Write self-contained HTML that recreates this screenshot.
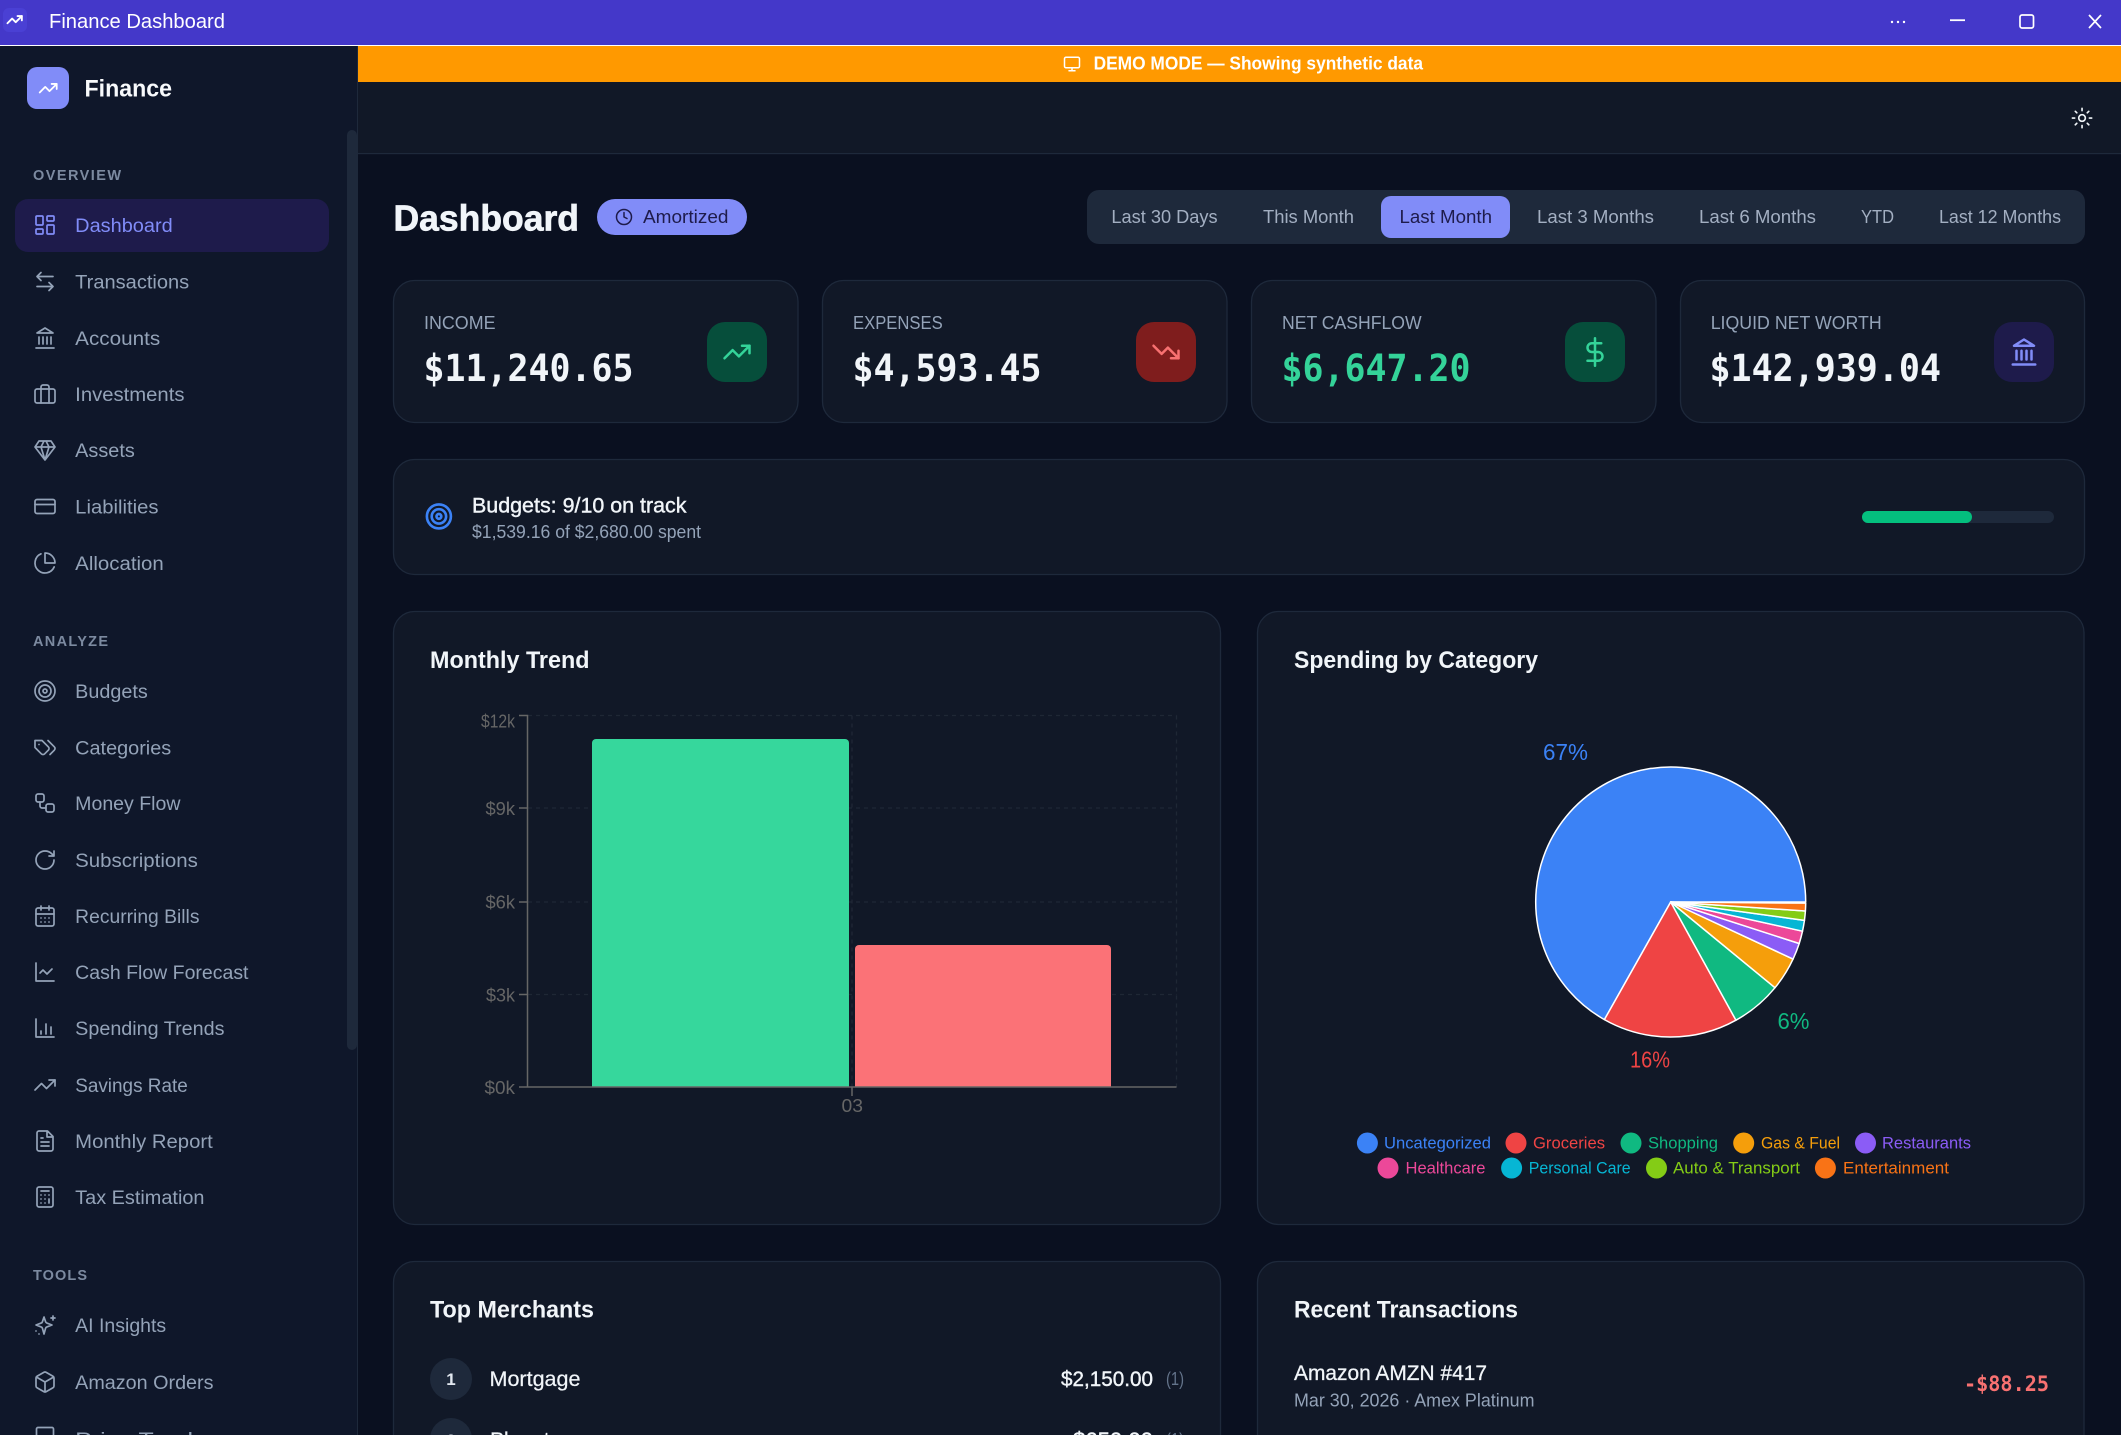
<!DOCTYPE html>
<html lang="en">
<head>
<meta charset="utf-8">
<title>Finance Dashboard</title>
<style>
html,body{margin:0;padding:0;width:2121px;height:1435px;overflow:hidden;background:#0a1020}
svg{display:block}
text{font-family:"Liberation Sans",sans-serif;white-space:pre}
.nav{font-size:19px;fill:#94a3b8}
.sec{font-size:14.5px;fill:#7c8aa0;font-weight:bold}
.ic{fill:none;stroke:#94a3b8;stroke-width:1.7;stroke-linecap:round;stroke-linejoin:round}
.lab{font-size:18px;fill:#94a3b8}
.val{font-family:"DejaVu Sans Mono","Liberation Mono",monospace;font-size:37px;font-weight:bold;fill:#f1f5f9}
.per{font-size:18px;fill:#a3afc2}
.card{fill:#111827;stroke:#1e293b;stroke-width:1.3}
.h{font-size:24px;font-weight:bold;fill:#f1f5f9}
.axis{font-size:18px;fill:#666}
.grid{stroke:#1f2735;stroke-width:1.3;stroke-dasharray:4 4;fill:none}
.leg{font-size:17px}
.pct{font-size:23px}
.slice{stroke:#fff;stroke-width:1.5;stroke-linejoin:round}
</style>
</head>
<body>
<svg xmlns="http://www.w3.org/2000/svg" width="2121" height="1435" viewBox="0 0 2121 1435">
  <defs>
    <g id="i-trend"><polyline points="22 7 13.5 15.5 8.5 10.5 2 17"/><polyline points="16 7 22 7 22 13"/></g>
    <g id="i-land"><path d="M3 22h18M6 18v-7M10 18v-7M14 18v-7M18 18v-7"/><path d="M12 2 20 7H4Z"/></g>
    <g id="i-target"><circle cx="12" cy="12" r="10"/><circle cx="12" cy="12" r="6"/><circle cx="12" cy="12" r="2"/></g>
  </defs>

  <!-- window chrome -->
  <rect width="2121" height="45" fill="#4438c9"/>
  <rect y="45" width="2121" height="1.2" fill="#fff"/>
  <rect x="3" y="8" width="24" height="24" rx="6" fill="#4a40d4"/>
  <use href="#i-trend" transform="translate(6,11) scale(.72)" fill="none" stroke="#fff" stroke-width="2.6" stroke-linecap="round" stroke-linejoin="round"/>
  <text x="49" y="28" font-size="20" fill="#fff" textLength="176" lengthAdjust="spacingAndGlyphs">Finance Dashboard</text>
  <g fill="#fff"><circle cx="1892" cy="22" r="1.2"/><circle cx="1898" cy="22" r="1.2"/><circle cx="1904" cy="22" r="1.2"/><rect x="1950" y="19.3" width="15" height="1.8"/></g>
  <rect x="2020" y="15" width="13.5" height="13" rx="2" fill="none" stroke="#fff" stroke-width="1.7"/>
  <path d="M2089 15l12 13M2101 15l-12 13" stroke="#fff" stroke-width="1.7" fill="none"/>

  <!-- sidebar -->
  <g>
    <rect y="46" width="357" height="1389" fill="#0f172a"/>
    <rect x="357" y="46" width="1" height="1389" fill="#1e293b"/>
    <rect x="347" y="130" width="10" height="920" rx="5" fill="#1e293b"/>
    <rect x="27" y="67" width="42" height="42" rx="10" fill="#818cf8"/>
    <use href="#i-trend" transform="translate(38,78) scale(.85)" fill="none" stroke="#fff" stroke-width="2.1" stroke-linecap="round" stroke-linejoin="round"/>
    <text x="84.5" y="96.500" font-size="24" font-weight="bold" fill="#f8fafc" textLength="87.500" lengthAdjust="spacingAndGlyphs">Finance</text>

    <text class="sec" x="33" y="180" textLength="88" lengthAdjust="spacing">OVERVIEW</text>
    <rect x="15" y="199" width="314" height="53" rx="13" fill="#1e1b4b"/>
    <g class="ic" style="stroke:#818cf8" transform="translate(33,213)"><rect x="3" y="3" width="7" height="9" rx="1"/><rect x="14" y="3" width="7" height="5" rx="1"/><rect x="14" y="12" width="7" height="9" rx="1"/><rect x="3" y="16" width="7" height="5" rx="1"/></g>
    <text class="nav" style="fill:#818cf8" x="75.2" y="232" textLength="97.5" lengthAdjust="spacingAndGlyphs">Dashboard</text>

    <g class="ic" transform="translate(33,269.5)"><path d="M8 3 4 7l4 4M4 7h16M16 21l4-4-4-4M20 17H4"/></g>
    <text class="nav" x="75.2" y="288.5" textLength="114" lengthAdjust="spacingAndGlyphs">Transactions</text>
    <g class="ic" transform="translate(33,326)"><use href="#i-land"/></g>
    <text class="nav" x="75.2" y="345" textLength="85" lengthAdjust="spacingAndGlyphs">Accounts</text>
    <g class="ic" transform="translate(33,382)"><rect x="2" y="7" width="20" height="14" rx="2"/><path d="M16 21V5a2 2 0 0 0-2-2h-4a2 2 0 0 0-2 2v16"/></g>
    <text class="nav" x="75.2" y="401" textLength="109.3" lengthAdjust="spacingAndGlyphs">Investments</text>
    <g class="ic" transform="translate(33,438)"><path d="M6 3h12l4 6-10 13L2 9ZM11 3 8 9l4 13 4-13-3-6M2 9h20"/></g>
    <text class="nav" x="75.2" y="457" textLength="59.6" lengthAdjust="spacingAndGlyphs">Assets</text>
    <g class="ic" transform="translate(33,494.5)"><rect x="2" y="5" width="20" height="14" rx="2"/><path d="M2 10h20"/></g>
    <text class="nav" x="75.2" y="513.5" textLength="83.3" lengthAdjust="spacingAndGlyphs">Liabilities</text>
    <g class="ic" transform="translate(33,551)"><path d="M21.21 15.89A10 10 0 1 1 8 2.83M22 12A10 10 0 0 0 12 2v10z"/></g>
    <text class="nav" x="75.2" y="570" textLength="88.6" lengthAdjust="spacingAndGlyphs">Allocation</text>

    <text class="sec" x="33" y="646" textLength="75" lengthAdjust="spacing">ANALYZE</text>
    <g class="ic" transform="translate(33,679)"><use href="#i-target"/></g>
    <text class="nav" x="75.2" y="698" textLength="72.6" lengthAdjust="spacingAndGlyphs">Budgets</text>
    <g class="ic" transform="translate(33,735.5)"><path d="M9 5H2v7l6.29 6.29c.94.94 2.48.94 3.42 0l3.58-3.58c.94-.94.94-2.48 0-3.42L9 5ZM6 9.01V9M15 5l6.3 6.3a2.4 2.4 0 0 1 0 3.4L17 19"/></g>
    <text class="nav" x="75.2" y="754.5" textLength="96" lengthAdjust="spacingAndGlyphs">Categories</text>
    <g class="ic" transform="translate(33,791)"><rect x="3" y="3" width="8" height="8" rx="2"/><path d="M7 11v4a2 2 0 0 0 2 2h4"/><rect x="13" y="13" width="8" height="8" rx="2"/></g>
    <text class="nav" x="75.2" y="810" textLength="105.3" lengthAdjust="spacingAndGlyphs">Money Flow</text>
    <g class="ic" transform="translate(33,848)"><path d="M21 12a9 9 0 1 1-9-9c2.52 0 4.93 1 6.74 2.74L21 8M21 3v5h-5"/></g>
    <text class="nav" x="75.2" y="867" textLength="122.6" lengthAdjust="spacingAndGlyphs">Subscriptions</text>
    <g class="ic" transform="translate(33,904)"><rect x="3" y="4" width="18" height="18" rx="2"/><path d="M16 2v4M8 2v4M3 10h18M8 14h.01M12 14h.01M16 14h.01M8 18h.01M12 18h.01M16 18h.01"/></g>
    <text class="nav" x="75.2" y="923" textLength="124.3" lengthAdjust="spacingAndGlyphs">Recurring Bills</text>
    <g class="ic" transform="translate(33,960)"><path d="M3 3v18h18M19 9l-5 5-4-4-3 3"/></g>
    <text class="nav" x="75.2" y="979" textLength="173.3" lengthAdjust="spacingAndGlyphs">Cash Flow Forecast</text>
    <g class="ic" transform="translate(33,1016)"><path d="M3 3v18h18M8 18v-3M13 18V8M18 18v-7"/></g>
    <text class="nav" x="75.2" y="1035" textLength="149.3" lengthAdjust="spacingAndGlyphs">Spending Trends</text>
    <g class="ic" transform="translate(33,1073)"><use href="#i-trend"/></g>
    <text class="nav" x="75.2" y="1092" textLength="112.6" lengthAdjust="spacingAndGlyphs">Savings Rate</text>
    <g class="ic" transform="translate(33,1129)"><path d="M14.5 2H6a2 2 0 0 0-2 2v16a2 2 0 0 0 2 2h12a2 2 0 0 0 2-2V7.5L14.5 2zM14 2v6h6M16 13H8M16 17H8M10 9H8"/></g>
    <text class="nav" x="75.2" y="1148" textLength="137.6" lengthAdjust="spacingAndGlyphs">Monthly Report</text>
    <g class="ic" transform="translate(33,1185)"><rect x="4" y="2" width="16" height="20" rx="2"/><path d="M8 6h8M16 14v4M16 10h.01M12 10h.01M8 10h.01M12 14h.01M8 14h.01M12 18h.01M8 18h.01"/></g>
    <text class="nav" x="75.2" y="1204" textLength="129.3" lengthAdjust="spacingAndGlyphs">Tax Estimation</text>

    <text class="sec" x="33" y="1280" textLength="54" lengthAdjust="spacing">TOOLS</text>
    <g class="ic" transform="translate(33,1313)"><path d="M11 4 9.4 8.8a2 2 0 0 1-1.3 1.3L3 12l5.1 1.9a2 2 0 0 1 1.3 1.3L11 21l1.6-5.8a2 2 0 0 1 1.3-1.3L19 12l-5.1-1.9a2 2 0 0 1-1.3-1.3L11 4ZM20 3v4M18 5h4M3 18h.01M6 21h.01"/></g>
    <text class="nav" x="75.2" y="1332" textLength="91" lengthAdjust="spacingAndGlyphs">AI Insights</text>
    <g class="ic" transform="translate(33,1370)"><path d="M21 16V8a2 2 0 0 0-1-1.73l-7-4a2 2 0 0 0-2 0l-7 4A2 2 0 0 0 3 8v8a2 2 0 0 0 1 1.73l7 4a2 2 0 0 0 2 0l7-4A2 2 0 0 0 21 16zM3.29 7 12 12l8.71-5M12 22V12"/></g>
    <text class="nav" x="75.2" y="1389" textLength="138.3" lengthAdjust="spacingAndGlyphs">Amazon Orders</text>
    <path class="ic" d="M36.500 1436V1429a1.500 1.500 0 0 1 1.500-1.500H52a1.500 1.500 0 0 1 1.500 1.500V1436"/>
    <text class="nav" x="75.2" y="1446" textLength="147" lengthAdjust="spacingAndGlyphs">Price Tracker</text>
  </g>

  <!-- demo banner + top bar -->
  <rect x="358" y="46" width="1763" height="36" fill="#ff9900"/>
  <g transform="translate(1063,55) scale(.75)" fill="none" stroke="#fff" stroke-width="2" stroke-linecap="round" stroke-linejoin="round"><rect x="2" y="3" width="20" height="14" rx="2"/><path d="M8 21h8M12 17v4"/></g>
  <text x="1093.6" y="69.5" font-size="18" font-weight="bold" fill="#fff" textLength="329.4" lengthAdjust="spacingAndGlyphs">DEMO MODE — Showing synthetic data</text>
  <rect x="358" y="82" width="1763" height="71" fill="#111827"/>
  <rect x="358" y="153" width="1763" height="1.2" fill="#1e293b"/>
  <g transform="translate(2071,107) scale(.92)" fill="none" stroke="#f1f5f9" stroke-width="1.8" stroke-linecap="round"><circle cx="12" cy="12" r="3.600"/><path d="M12 1.500v2.500M12 20v2.500M4.700 4.700l1.600 1.600M17.700 17.700l1.600 1.600M1.500 12h2.500M20 12h2.500M6.300 17.700l-1.600 1.600M19.300 4.700l-1.600 1.600"/></g>

  <!-- page header -->
  <text x="393.500" y="230.500" font-size="36" font-weight="bold" fill="#f1f5f9" stroke="#f1f5f9" stroke-width=".7" textLength="185.500" lengthAdjust="spacingAndGlyphs">Dashboard</text>
  <rect x="597" y="199" width="150" height="36" rx="18" fill="#818cf8"/>
  <g transform="translate(615,208) scale(.75)" fill="none" stroke="#1e1b4b" stroke-width="2" stroke-linecap="round" stroke-linejoin="round"><circle cx="12" cy="12" r="10"/><path d="M12 6v6l4 2"/></g>
  <text x="643" y="223" font-size="18" fill="#1e1b4b" textLength="85.5" lengthAdjust="spacingAndGlyphs">Amortized</text>

  <rect x="1087" y="190" width="998" height="54" rx="12" fill="#1e293b"/>
  <rect x="1381" y="196" width="129" height="42" rx="10" fill="#818cf8"/>
  <text class="per" x="1111.4" y="223" textLength="106.2" lengthAdjust="spacingAndGlyphs">Last 30 Days</text>
  <text class="per" x="1263" y="223" textLength="91" lengthAdjust="spacingAndGlyphs">This Month</text>
  <text class="per" style="fill:#1e1b4b" x="1399.5" y="223" textLength="92.5" lengthAdjust="spacingAndGlyphs">Last Month</text>
  <text class="per" x="1537" y="223" textLength="117" lengthAdjust="spacingAndGlyphs">Last 3 Months</text>
  <text class="per" x="1699" y="223" textLength="117" lengthAdjust="spacingAndGlyphs">Last 6 Months</text>
  <text class="per" x="1861" y="223" textLength="33" lengthAdjust="spacingAndGlyphs">YTD</text>
  <text class="per" x="1939" y="223" textLength="122" lengthAdjust="spacingAndGlyphs">Last 12 Months</text>

  <!-- stat cards -->
  <rect class="card" x="393.5" y="280.5" width="404.5" height="142" rx="21"/>
  <text class="lab" x="424" y="328.8" textLength="71.5" lengthAdjust="spacingAndGlyphs">INCOME</text>
  <text class="val" x="423.500" y="381" textLength="210" lengthAdjust="spacingAndGlyphs">$11,240.65</text>
  <rect x="707" y="322" width="60" height="60" rx="18" fill="#064e3b"/>
  <use href="#i-trend" transform="translate(722,337) scale(1.25)" fill="none" stroke="#34d399" stroke-width="2" stroke-linecap="round" stroke-linejoin="round"/>

  <rect class="card" x="822.5" y="280.5" width="404.5" height="142" rx="21"/>
  <text class="lab" x="853" y="328.8" textLength="89.7" lengthAdjust="spacingAndGlyphs">EXPENSES</text>
  <text class="val" x="852.500" y="381" textLength="189" lengthAdjust="spacingAndGlyphs">$4,593.45</text>
  <rect x="1136" y="322" width="60" height="60" rx="18" fill="#7f1d1d"/>
  <g transform="translate(1151,337) scale(1.25)" fill="none" stroke="#f87171" stroke-width="2" stroke-linecap="round" stroke-linejoin="round"><polyline points="22 17 13.5 8.5 8.5 13.5 2 7"/><polyline points="16 17 22 17 22 11"/></g>

  <rect class="card" x="1251.5" y="280.5" width="404.5" height="142" rx="21"/>
  <text class="lab" x="1282" y="328.8" textLength="139.6" lengthAdjust="spacingAndGlyphs">NET CASHFLOW</text>
  <text class="val" style="fill:#34d399" x="1281.500" y="381" textLength="189" lengthAdjust="spacingAndGlyphs">$6,647.20</text>
  <rect x="1565" y="322" width="60" height="60" rx="18" fill="#064e3b"/>
  <g transform="translate(1580,337) scale(1.25)" fill="none" stroke="#34d399" stroke-width="2" stroke-linecap="round" stroke-linejoin="round"><path d="M12 1v22M17 5H9.500a3.500 3.500 0 0 0 0 7h5a3.500 3.500 0 0 1 0 7H6"/></g>

  <rect class="card" x="1680.500" y="280.500" width="404" height="142" rx="21"/>
  <text class="lab" x="1710.700" y="328.800" textLength="171" lengthAdjust="spacingAndGlyphs">LIQUID NET WORTH</text>
  <text class="val" x="1709.500" y="381" textLength="231.500" lengthAdjust="spacingAndGlyphs">$142,939.04</text>
  <rect x="1994" y="322" width="60" height="60" rx="18" fill="#1e1b4b"/>
  <use href="#i-land" transform="translate(2009,337) scale(1.25)" fill="none" stroke="#818cf8" stroke-width="2" stroke-linecap="round" stroke-linejoin="round"/>

  <!-- budgets -->
  <rect class="card" x="393.500" y="459.500" width="1691" height="115" rx="21"/>
  <use href="#i-target" transform="translate(424.500,502) scale(1.2)" fill="none" stroke="#3b82f6" stroke-width="2.200"/>
  <text x="472" y="512.500" font-size="21" fill="#f1f5f9" stroke="#f1f5f9" stroke-width=".4" textLength="214.500" lengthAdjust="spacingAndGlyphs">Budgets: 9/10 on track</text>
  <text x="472" y="538" font-size="18" fill="#94a3b8" textLength="229" lengthAdjust="spacingAndGlyphs">$1,539.16 of $2,680.00 spent</text>
  <rect x="1862" y="511" width="192" height="12" rx="6" fill="#1e293b"/>
  <rect x="1862" y="511" width="110" height="12" rx="6" fill="#04bf7e"/>

  <!-- monthly trend -->
  <rect class="card" x="393.500" y="611.500" width="827" height="613" rx="21"/>
  <text class="h" x="430" y="668" textLength="159.500" lengthAdjust="spacingAndGlyphs">Monthly Trend</text>
  <path class="grid" d="M528 715.500H1176.500M528 808H1176.500M528 902H1176.500M528 994.500H1176.500M852 715.500V1087M1176.500 715.500V1087"/>
  <path d="M592 1087V743a4 4 0 0 1 4-4H845a4 4 0 0 1 4 4V1087Z" fill="#36d79c"/>
  <path d="M855 1087V949a4 4 0 0 1 4-4H1107a4 4 0 0 1 4 4V1087Z" fill="#fb7277"/>
  <path d="M519 715.500H527.500V1087H1176.500M519 808H527.500M519 902H527.500M519 994.500H527.500M519 1087H527.500M852 1087V1096" fill="none" stroke="#666" stroke-width="1.500"/>
  <text class="axis" x="481" y="727.500" textLength="34" lengthAdjust="spacingAndGlyphs">$12k</text>
  <text class="axis" x="485.500" y="815" textLength="29.500" lengthAdjust="spacingAndGlyphs">$9k</text>
  <text class="axis" x="485.500" y="908.500" textLength="29.500" lengthAdjust="spacingAndGlyphs">$6k</text>
  <text class="axis" x="486" y="1001.500" textLength="29" lengthAdjust="spacingAndGlyphs">$3k</text>
  <text class="axis" x="484.500" y="1094" textLength="30.500" lengthAdjust="spacingAndGlyphs">$0k</text>
  <text class="axis" x="841.500" y="1112" textLength="21.500" lengthAdjust="spacingAndGlyphs">03</text>

  <!-- spending by category -->
  <rect class="card" x="1257.500" y="611.500" width="826.500" height="613" rx="21"/>
  <text class="h" x="1294" y="668" textLength="244" lengthAdjust="spacingAndGlyphs">Spending by Category</text>
  <g transform="translate(1670.700,902)">
    <path class="slice" fill="#3b82f6" d="M0 0L-66.300 117.600A135 135 0 1 1 135 0Z"/>
    <path class="slice" fill="#ef4444" d="M0 0L65.250 118.200A135 135 0 0 1 -66.300 117.600Z"/>
    <path class="slice" fill="#10b981" d="M0 0L104.300 85.700A135 135 0 0 1 65.250 118.200Z"/>
    <path class="slice" fill="#f59e0b" d="M0 0L122.350 57.050A135 135 0 0 1 104.300 85.700Z"/>
    <path class="slice" fill="#8b5cf6" d="M0 0L128.500 41.500A135 135 0 0 1 122.350 57.050Z"/>
    <path class="slice" fill="#ec4899" d="M0 0L131.800 29.200A135 135 0 0 1 128.500 41.500Z"/>
    <path class="slice" fill="#06b6d4" d="M0 0L133.750 18.320A135 135 0 0 1 131.800 29.200Z"/>
    <path class="slice" fill="#84cc16" d="M0 0L134.700 8.950A135 135 0 0 1 133.750 18.320Z"/>
    <path class="slice" fill="#f97316" d="M0 0L135 1.180A135 135 0 0 1 134.700 8.950Z"/>
  </g>
  <text class="pct" x="1543" y="760" fill="#3b82f6" textLength="45" lengthAdjust="spacingAndGlyphs">67%</text>
  <text class="pct" x="1630" y="1067.500" fill="#ef4444" textLength="40" lengthAdjust="spacingAndGlyphs">16%</text>
  <text class="pct" x="1777.500" y="1029" fill="#10b981" textLength="32" lengthAdjust="spacingAndGlyphs">6%</text>

  <g class="leg">
    <circle cx="1367.400" cy="1143" r="10.500" fill="#3b82f6"/><text x="1384" y="1148.500" fill="#3b82f6" textLength="107" lengthAdjust="spacingAndGlyphs">Uncategorized</text>
    <circle cx="1516" cy="1143" r="10.500" fill="#ef4444"/><text x="1533" y="1148.500" fill="#ef4444" textLength="72" lengthAdjust="spacingAndGlyphs">Groceries</text>
    <circle cx="1631" cy="1143" r="10.500" fill="#10b981"/><text x="1648" y="1148.500" fill="#10b981" textLength="70" lengthAdjust="spacingAndGlyphs">Shopping</text>
    <circle cx="1743.700" cy="1143" r="10.500" fill="#f59e0b"/><text x="1761" y="1148.500" fill="#f59e0b" textLength="79" lengthAdjust="spacingAndGlyphs">Gas &amp; Fuel</text>
    <circle cx="1865.500" cy="1143" r="10.500" fill="#8b5cf6"/><text x="1882" y="1148.500" fill="#8b5cf6" textLength="89" lengthAdjust="spacingAndGlyphs">Restaurants</text>
    <circle cx="1388" cy="1168" r="10.500" fill="#ec4899"/><text x="1405.500" y="1173.500" fill="#ec4899" textLength="80" lengthAdjust="spacingAndGlyphs">Healthcare</text>
    <circle cx="1511.600" cy="1168" r="10.500" fill="#06b6d4"/><text x="1528.700" y="1173.500" fill="#06b6d4" textLength="102" lengthAdjust="spacingAndGlyphs">Personal Care</text>
    <circle cx="1656.500" cy="1168" r="10.500" fill="#84cc16"/><text x="1673" y="1173.500" fill="#84cc16" textLength="127" lengthAdjust="spacingAndGlyphs">Auto &amp; Transport</text>
    <circle cx="1825.400" cy="1168" r="10.500" fill="#f97316"/><text x="1843" y="1173.500" fill="#f97316" textLength="106" lengthAdjust="spacingAndGlyphs">Entertainment</text>
  </g>

  <!-- top merchants -->
  <path class="card" d="M393.500 1436V1282.500a21 21 0 0 1 21-21H1199.500a21 21 0 0 1 21 21V1436Z"/>
  <text class="h" x="430" y="1317.500" textLength="164" lengthAdjust="spacingAndGlyphs">Top Merchants</text>
  <circle cx="451" cy="1379" r="21" fill="#1e293b"/>
  <text x="451" y="1385" font-size="17" font-weight="bold" fill="#e2e8f0" text-anchor="middle">1</text>
  <text x="489.500" y="1386" font-size="21" fill="#f1f5f9" stroke="#f1f5f9" stroke-width=".2" textLength="91" lengthAdjust="spacingAndGlyphs">Mortgage</text>
  <text x="1061" y="1386" font-size="21" fill="#f1f5f9" stroke="#f1f5f9" stroke-width=".4" textLength="92" lengthAdjust="spacingAndGlyphs">$2,150.00</text>
  <text x="1166" y="1385" font-size="18" fill="#64748b" textLength="18" lengthAdjust="spacingAndGlyphs">(1)</text>
  <circle cx="451" cy="1439" r="21" fill="#1e293b"/>
  <text x="451" y="1446" font-size="17" font-weight="bold" fill="#e2e8f0" text-anchor="middle">2</text>
  <text x="490" y="1447" font-size="21" fill="#f1f5f9" stroke="#f1f5f9" stroke-width=".2">Planet</text>
  <text x="1073" y="1447" font-size="21" fill="#f1f5f9" stroke="#f1f5f9" stroke-width=".4" textLength="80" lengthAdjust="spacingAndGlyphs">$650.00</text>
  <text x="1166" y="1446" font-size="18" fill="#64748b" textLength="18" lengthAdjust="spacingAndGlyphs">(1)</text>

  <!-- recent transactions -->
  <path class="card" d="M1257.500 1436V1282.500a21 21 0 0 1 21-21H2063a21 21 0 0 1 21 21V1436Z"/>
  <text class="h" x="1294" y="1317.500" textLength="224" lengthAdjust="spacingAndGlyphs">Recent Transactions</text>
  <text x="1294" y="1380" font-size="21" fill="#f1f5f9" stroke="#f1f5f9" stroke-width=".3" textLength="193" lengthAdjust="spacingAndGlyphs">Amazon AMZN #417</text>
  <text x="1294" y="1406.500" font-size="18" fill="#94a3b8" textLength="240.500" lengthAdjust="spacingAndGlyphs">Mar 30, 2026 · Amex Platinum</text>
  <text x="1964" y="1391" font-size="21" font-weight="bold" fill="#f87171" textLength="85" lengthAdjust="spacingAndGlyphs" style="font-family:'DejaVu Sans Mono','Liberation Mono',monospace">-$88.25</text>
</svg>
</body>
</html>
